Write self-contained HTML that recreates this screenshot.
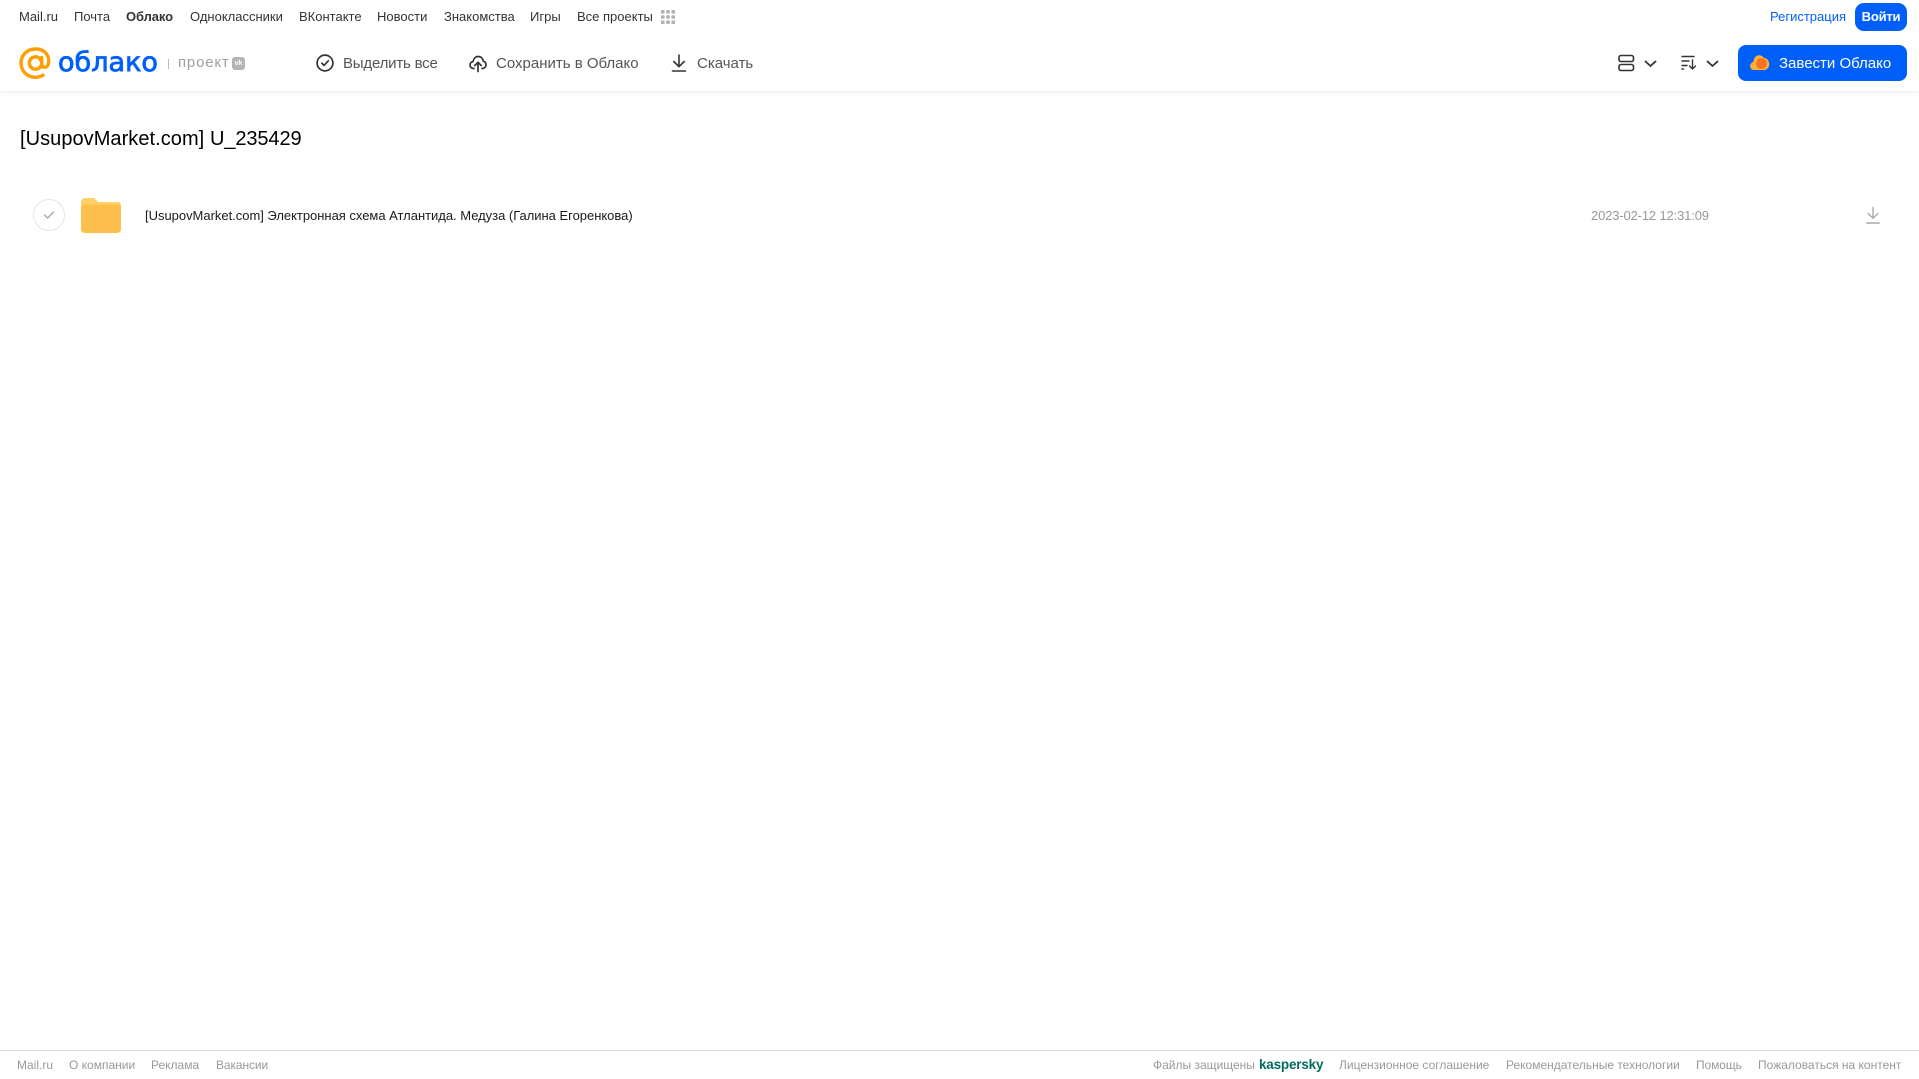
<!DOCTYPE html>
<html lang="ru">
<head>
<meta charset="utf-8">
<title>[UsupovMarket.com] U_235429</title>
<style>
html,body{margin:0;padding:0;background:#fff;}
body{position:relative;width:1919px;height:1079px;overflow:hidden;font-family:"Liberation Sans",Arial,sans-serif;}
.t{position:absolute;white-space:nowrap;line-height:16px;}
.n{top:9px;font-size:13px;color:#333;}
.a{top:56px;font-size:15px;color:#555;}
.f{top:1057px;font-size:12px;color:#999;}
svg{position:absolute;overflow:visible;}
.hdr{position:absolute;left:0;top:0;width:1919px;height:91px;background:#fff;box-shadow:0 1px 6px rgba(0,0,0,.08);}
.btn{position:absolute;background:#005ff9;color:#fff;}
</style>
</head>
<body>
<div class="hdr"></div>

<span class="t n" style="left:19px">Mail.ru</span>
<span class="t n" style="left:74px">Почта</span>
<span class="t n" style="left:126px;font-weight:bold;letter-spacing:-.1px">Облако</span>
<span class="t n" style="left:190px">Одноклассники</span>
<span class="t n" style="left:299px">ВКонтакте</span>
<span class="t n" style="left:377px">Новости</span>
<span class="t n" style="left:444px">Знакомства</span>
<span class="t n" style="left:530px">Игры</span>
<span class="t n" style="left:577px">Все проекты</span>
<svg style="left:661px;top:10px" width="14" height="14" fill="#b0b0b0">
<rect x="0" y="0" width="3.6" height="3.6" rx="1"/><rect x="5.2" y="0" width="3.6" height="3.6" rx="1"/><rect x="10.4" y="0" width="3.6" height="3.6" rx="1"/>
<rect x="0" y="5.2" width="3.6" height="3.6" rx="1"/><rect x="5.2" y="5.2" width="3.6" height="3.6" rx="1"/><rect x="10.4" y="5.2" width="3.6" height="3.6" rx="1"/>
<rect x="0" y="10.4" width="3.6" height="3.6" rx="1"/><rect x="5.2" y="10.4" width="3.6" height="3.6" rx="1"/><rect x="10.4" y="10.4" width="3.6" height="3.6" rx="1"/>
</svg>

<span class="t" style="left:1770px;top:9px;font-size:13px;color:#005ff9">Регистрация</span>
<div class="btn" style="left:1855px;top:3px;width:52px;height:28px;border-radius:9px;font-size:13px;font-weight:bold;line-height:28px;text-align:center;letter-spacing:-.2px">Войти</div>

<!-- logo -->
<svg style="left:19px;top:47px" width="34" height="33" viewBox="0 0 34 33" fill="none">
<circle cx="16.5" cy="16" r="6.2" stroke="#ff9e00" stroke-width="3.4"/>
<path d="M22.7 10.5V17.5C22.7 21 27.6 21.2 29 18C31.5 11 27.5 2 16.5 2C8 2 2 8.3 2 16C2 24 8.3 30.3 16.5 30.3C19.5 30.3 22 29.5 24 28.2" stroke="#ff9e00" stroke-width="3.4" stroke-linecap="round"/>
</svg>
<svg style="left:56px;top:42px" width="110" height="40">
<text x="2" y="29" font-family="DejaVu Sans" font-size="27" fill="#005ff9" stroke="#005ff9" stroke-width=".8" textLength="100" lengthAdjust="spacingAndGlyphs">облако</text>
</svg>
<div style="position:absolute;left:168px;top:59px;width:1px;height:10px;background:#bbb"></div>
<span class="t" style="left:178px;top:55px;font-size:15px;color:#a0a0a0;letter-spacing:.8px">проект</span>
<div style="position:absolute;left:232px;top:57px;width:13px;height:13px;border-radius:3px;background:#b4b4b4;color:#fff;font-size:7px;font-weight:bold;line-height:13px;text-align:center">vk</div>

<!-- actions -->
<svg style="left:316px;top:54px" width="18" height="18" fill="none" stroke="#333" stroke-width="1.7" stroke-linecap="round" stroke-linejoin="round">
<circle cx="9" cy="9" r="7.9"/><path d="M5.8 9.2L8 11.4L12.3 6.8"/>
</svg>
<span class="t a" style="left:343px;letter-spacing:-.2px">Выделить все</span>
<svg style="left:469px;top:54px" width="18" height="18" fill="none" stroke="#333" stroke-width="1.7" stroke-linecap="round" stroke-linejoin="round">
<path d="M5 14.5H4.6C2.5 14.5 1 13 1 11C1 9.2 2.3 7.8 4 7.6C4.5 4.6 6.5 2.5 9.2 2.5C12 2.5 13.9 4.5 14.3 7.2C15.9 7.6 17 9 17 10.8C17 12.9 15.5 14.5 13.4 14.5H13"/>
<path d="M9 17.5V8.5M5.8 11.5L9 8.3L12.2 11.5"/>
</svg>
<span class="t a" style="left:496px">Сохранить в Облако</span>
<svg style="left:671px;top:54px" width="16" height="18" fill="none" stroke="#333" stroke-width="1.6" stroke-linecap="round" stroke-linejoin="round">
<path d="M8 1V12.5M2.8 7.5L8 12.7L13.2 7.5M1.5 17H14.5"/>
</svg>
<span class="t a" style="left:697px">Скачать</span>

<!-- view / sort -->
<svg style="left:1618px;top:54px" width="17" height="18" fill="none" stroke="#333" stroke-width="1.6">
<rect x="1" y="1.5" width="14.5" height="6" rx="2"/><rect x="1" y="10.5" width="14.5" height="6" rx="2"/>
</svg>
<svg style="left:1644px;top:60px" width="13" height="8" fill="none" stroke="#333" stroke-width="1.8" stroke-linecap="round" stroke-linejoin="round"><path d="M1.5 1.5L6.5 6L11.5 1.5"/></svg>
<svg style="left:1681px;top:55px" width="16" height="15" fill="none" stroke="#333" stroke-width="1.4" stroke-linecap="round" stroke-linejoin="round">
<path d="M1 1.5H13M1 6H8M1 10.5H6M1 14H2.5M11.5 5V14M8.5 11L11.5 14L14.5 11"/>
</svg>
<svg style="left:1706px;top:60px" width="13" height="8" fill="none" stroke="#333" stroke-width="1.8" stroke-linecap="round" stroke-linejoin="round"><path d="M1.5 1.5L6.5 6L11.5 1.5"/></svg>

<div class="btn" style="left:1738px;top:45px;width:169px;height:36px;border-radius:8px"></div>
<svg style="left:1750px;top:54px" width="20" height="18">
<path d="M4 16C1.5 16 0.2 14 0.2 12C0.2 10 1.5 8.3 3.4 8C3.8 4 6 1.3 9 1.3C11 1.3 12.6 2.2 13.6 3.8C16.8 4 19.3 7 19.3 10.3C19.3 13.5 17 16 14 16Z" fill="#ffb035"/>
<circle cx="11.5" cy="9.5" r="5.4" fill="#f5731f"/>
</svg>
<span class="t" style="left:1779px;top:56px;font-size:15px;color:#fff">Завести Облако</span>

<!-- title -->
<div class="t" style="left:20px;top:127px;font-size:20px;line-height:24px;color:#000;letter-spacing:.05px">[UsupovMarket.com]</div>
<div class="t" style="left:210px;top:127px;font-size:20px;line-height:24px;color:#000;letter-spacing:-.1px">U_235429</div>

<!-- row -->
<div style="position:absolute;left:33px;top:199px;width:30px;height:30px;border:1px solid #e5e5e5;border-radius:50%"></div>
<svg style="left:43px;top:210px" width="12" height="10" fill="none" stroke="#aaa" stroke-width="1.4" stroke-linecap="round" stroke-linejoin="round"><path d="M1.5 5L4.6 8L10.5 2"/></svg>
<svg style="left:81px;top:198px" width="40" height="35">
<path d="M0 4C0 1.8 1.8 0 4 0H11.5C13.3 0 14 .8 15 2L17.5 4H37C38.7 4 40 5.3 40 7V31C40 33.2 38.2 35 36 35H4C1.8 35 0 33.2 0 31Z" fill="#ffd167"/>
<path d="M0 9.5C0 7.8 1.3 6.5 3 6.5H37C38.7 6.5 40 7.8 40 9.5V31C40 33.2 38.2 35 36 35H4C1.8 35 0 33.2 0 31Z" fill="#ffbf4d"/>
</svg>
<span class="t" style="left:145px;top:208px;font-size:13px;color:#1a1a1a;letter-spacing:-.02px">[UsupovMarket.com] Электронная схема Атлантида. Медуза (Галина Егоренкова)</span>
<span class="t" style="left:1591px;top:208px;font-size:13px;color:#999;letter-spacing:-.15px">2023-02-12 12:31:09</span>
<svg style="left:1866px;top:206px" width="14" height="18" fill="none" stroke="#aaa" stroke-width="1.4" stroke-linecap="round" stroke-linejoin="round">
<path d="M7 1.5V12M2 7.5L7 12.3L12 7.5M.7 17H13.3"/>
</svg>

<!-- footer -->
<div style="position:absolute;left:0;top:1050px;width:1919px;height:1px;background:#d9d9d9"></div>
<span class="t f" style="left:17px">Mail.ru</span>
<span class="t f" style="left:69px">О компании</span>
<span class="t f" style="left:151px">Реклама</span>
<span class="t f" style="left:216px;letter-spacing:-.1px">Вакансии</span>
<span class="t f" style="left:1153px">Файлы защищены</span>
<span class="t f" style="left:1259px;top:1057px;font-size:13.5px;font-weight:bold;color:#006d5c;letter-spacing:-.2px">kaspersky</span>
<span class="t f" style="left:1339px">Лицензионное соглашение</span>
<span class="t f" style="left:1506px">Рекомендательные технологии</span>
<span class="t f" style="left:1696px;letter-spacing:-.1px">Помощь</span>
<span class="t f" style="left:1758px">Пожаловаться на контент</span>
</body>
</html>
